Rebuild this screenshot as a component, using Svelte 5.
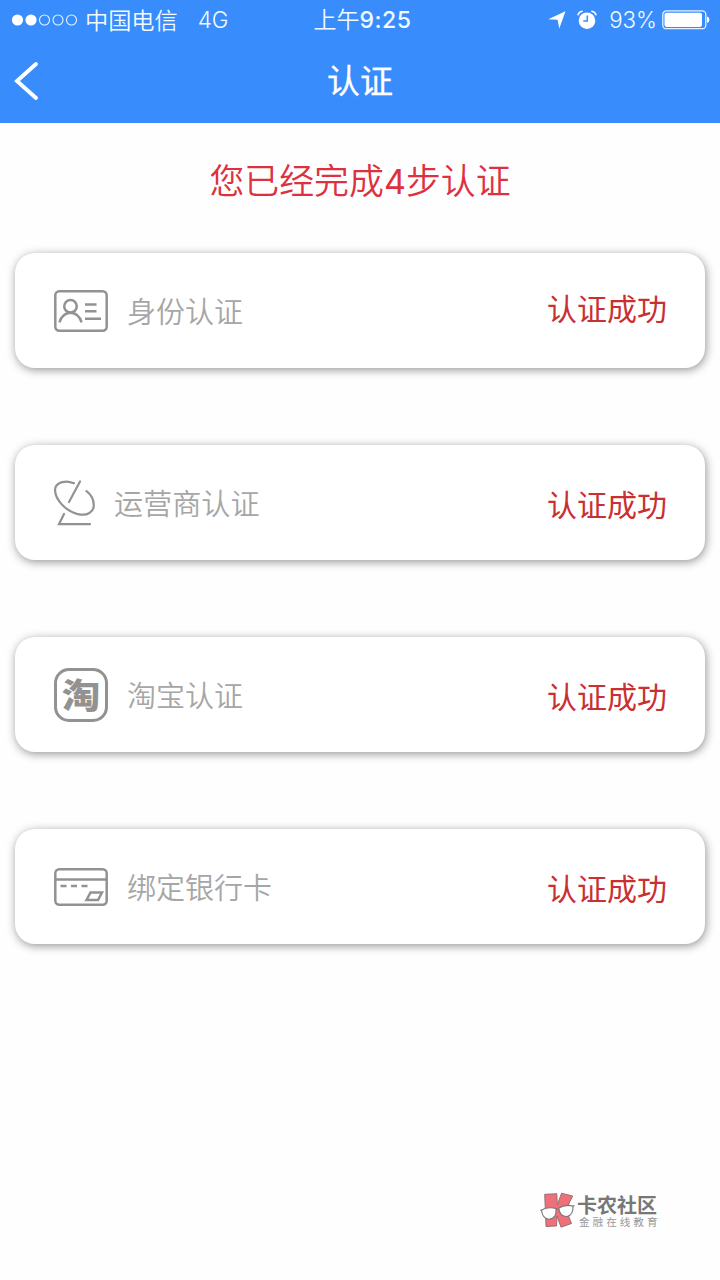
<script>
  const steps = [
    { icon: 'id', label: '身份认证', status: '认证成功' },
    { icon: 'dish', label: '运营商认证', status: '认证成功' },
    { icon: 'tao', label: '淘宝认证', status: '认证成功' },
    { icon: 'card', label: '绑定银行卡', status: '认证成功' }
  ];
</script>

<div class="screen">
  <header>
    <div class="statusbar">
      <div class="carrier">
        <svg width="66" height="14" viewBox="0 0 66 14">
          <circle cx="5.5" cy="7" r="5.6" fill="#fff" />
          <circle cx="19" cy="7" r="5.6" fill="#fff" />
          <g fill="none" stroke="#e4f3ff" stroke-width="1.1">
            <circle cx="32.5" cy="7" r="5" />
            <circle cx="46" cy="7" r="5" />
            <circle cx="59.5" cy="7" r="5" />
          </g>
        </svg>
        <span class="operator">中国电信</span>
        <span class="network">4G</span>
      </div>
      <div class="time">上午<b>9:25</b></div>
      <div class="power">
        <svg class="arrow" width="18" height="18" viewBox="0 0 18 18">
          <path d="M17.5 0.3 L11.3 17.5 L9.6 8.8 L0.3 8.2 Z" fill="#fff" />
        </svg>
        <svg class="alarm" width="20" height="20" viewBox="0 0 20 20">
          <circle cx="10" cy="10.7" r="8.3" fill="#fff" />
          <path d="M1 4.8 Q2 1.8 5.2 1.3 M19 4.8 Q18 1.8 14.8 1.3" fill="none" stroke="#fff" stroke-width="1.5" stroke-linecap="round" />
          <path d="M10.3 5.5 V11 H6.3" fill="none" stroke="#388cfc" stroke-width="1.5" />
        </svg>
        <span class="percent">93%</span>
        <svg class="battery" width="48" height="20" viewBox="0 0 48 20">
          <rect x="0.8" y="0.9" width="43" height="17.8" rx="3.5" fill="none" stroke="#e4f3ff" stroke-width="1.3" />
          <rect x="2.5" y="2.7" width="37.5" height="14.2" rx="1.8" fill="#fff" />
          <path d="M45 6.6 Q47.4 7.2 47.4 9.8 T45 13 Z" fill="#fff" />
        </svg>
      </div>
    </div>
    <nav>
      <svg class="back" width="26" height="40" viewBox="0 0 26 40">
        <path d="M22 3 L3 20 L22 37" fill="none" stroke="#fff" stroke-width="3.9" stroke-linecap="round" />
      </svg>
      <h1>认证</h1>
    </nav>
  </header>

  <p class="summary">您已经完成<span>4</span>步认证</p>

  <main>
    {#each steps as step}
      <section class="step {step.icon}">
        {#if step.icon === 'id'}
          <svg width="54" height="42" viewBox="0 0 54 42" fill="none" stroke="#929292" stroke-width="2.5">
            <rect x="1.3" y="1.3" width="51.4" height="39.4" rx="4" />
            <circle cx="16.5" cy="16.3" r="6.3" />
            <path d="M5.5 32.3 Q8 23.2 16.5 22.7 Q25 23.2 27.5 32.3 M31 14.5 H42.5 M31 21.3 H42.5 M31 28.7 H47" />
          </svg>
        {:else if step.icon === 'dish'}
          <svg width="42" height="46" viewBox="0 0 42 46" fill="none" stroke="#929292" stroke-width="2.2" stroke-linecap="round">
            <path d="M20 3.2 C12 0 3 1.8 1.3 8 C-0.5 18 11 31 24 34.2 C33.5 36.2 39.6 32 39.8 25.5 C39.8 20 37 14.5 32.5 11.2" />
            <path d="M26 1.5 L15 22 M10 34 L5 44.2 H36" />
          </svg>
        {:else if step.icon === 'tao'}
          <span class="taobao"><span>淘</span></span>
        {:else}
          <svg width="54" height="38" viewBox="0 0 54 38" fill="none" stroke="#929292" stroke-width="2.5">
            <rect x="1.3" y="1.3" width="51.4" height="35.4" rx="4" />
            <path d="M1.2 11.5 H52.8 M6.5 18 H12.5 M17 18 H23 M27.5 18 H33.5" />
            <path d="M36.5 24.5 H48 L44 32 H32.5 Z" />
          </svg>
        {/if}
        <span class="label">{step.label}</span>
        <span class="status">{step.status}</span>
      </section>
    {/each}
  </main>

  <footer>
    <svg width="36" height="38" viewBox="0 0 36 38">
      <path d="M4.7 3.3 L16.8 2.7 L17.3 14 L21.5 2.2 L32.7 5 L26 18.5 L31.5 32.5 L21 36.2 L17 25 L16.5 35 L6 35.5 Z" fill="#ef7078" stroke="#8b6b6e" stroke-width="0.9" />
      <g fill="#fff" stroke="#777" stroke-width="1.1">
        <path d="M1.5 19 Q8 15.5 16 17.5 Q17 27.5 9 28.2 Q2.5 28 1.5 19 Z" />
        <path d="M18.8 17 Q25 13 33 15 Q33.5 24 27 25.5 Q19.5 25.5 18.8 17 Z" />
        <path d="M16 18.5 L18.8 17.8 M0.3 19.2 L2 19.6 M32.7 15.6 L34.5 14.4" />
      </g>
    </svg>
    <div class="brand">
      <strong>卡农社区</strong>
      <small>金融在线教育</small>
    </div>
  </footer>
</div>

<style>
  :global(body) {
    background: #fefefe;
  }
  .screen {
    box-sizing: border-box;
    width: 720px;
    height: 1280px;
    overflow: hidden;
    display: flex;
    flex-direction: column;
    background: #fefefe;
    font-family: 'Noto Sans CJK SC', sans-serif;
  }
  header {
    height: 123px;
    flex: none;
    background: #388cfc;
    color: #fff;
  }
  .statusbar {
    height: 39px;
    display: grid;
    grid-template-columns: 1fr auto 1fr;
    align-items: center;
    padding: 0 10px 0 12px;
    font-size: 23px;
    line-height: 36px;
    font-weight: 350;
    color: #f2faff;
  }
  .carrier,
  .power {
    display: flex;
    align-items: center;
  }
  .power {
    justify-content: flex-end;
  }
  .operator {
    margin-left: 7px;
    font-size: 23.2px;
    padding-bottom: 2px;
  }
  .network {
    margin-left: 20px;
    font-family: Inter, sans-serif;
    font-size: 22.4px;
  }
  .time {
    white-space: nowrap;
    padding: 0 0 2px 3px;
  }
  .time b {
    font-family: Inter, sans-serif;
    font-weight: 550;
    font-size: 23px;
    letter-spacing: 0.5px;
  }
  .alarm {
    margin: 0 12px 0 11px;
  }
  .percent {
    font-family: Inter, sans-serif;
    font-size: 22.3px;
  }
  .battery {
    margin-left: 5px;
  }
  nav {
    height: 83px;
    display: grid;
    grid-template-columns: 1fr auto 1fr;
    align-items: center;
    padding: 0 14px;
  }
  h1 {
    margin: 0;
    padding-bottom: 4px;
    font-size: 33px;
    line-height: 40px;
    font-weight: 400;
    -webkit-text-stroke: 0.3px #fff;
  }
  .summary {
    margin: 30px 0 48px;
    height: 52px;
    line-height: 52px;
    font-size: 34.9px;
    text-align: center;
    font-weight: 350;
    color: #dd3140;
  }
  .summary span {
    font-family: Inter, sans-serif;
    font-size: 34px;
    font-weight: 400;
  }
  main {
    display: flex;
    flex-direction: column;
    gap: 77px;
    padding: 0 15px;
  }
  .step {
    box-sizing: border-box;
    height: 115px;
    display: flex;
    align-items: center;
    padding: 0 38px 0 39px;
    border-radius: 20px;
    background: #fff;
    box-shadow: 1px 2px 10px rgba(0, 0, 0, 0.42);
  }
  .label {
    margin-left: 19px;
    padding-bottom: 2px;
    font-size: 29px;
    line-height: 44px;
    font-weight: 350;
    color: #a6a6a6;
  }
  .dish .label {
    margin-left: 18px;
    font-size: 29.1px;
  }
  .status {
    margin-left: auto;
    font-size: 30px;
    line-height: 44px;
    color: #c9302f;
  }
  .id .status {
    padding-bottom: 7px;
  }
  .taobao {
    box-sizing: border-box;
    width: 54px;
    height: 54px;
    border: 3px solid #929292;
    border-radius: 15px;
    display: flex;
    align-items: center;
    justify-content: center;
    font-size: 34px;
    line-height: 48px;
    font-weight: 900;
    color: #929292;
  }
  .taobao span {
    padding-bottom: 1px;
    transform: scaleX(1.13);
  }
  footer {
    margin-top: auto;
    margin-bottom: 51px;
    padding-left: 540px;
    display: flex;
    align-items: center;
  }
  .brand {
    margin-left: 1px;
    display: flex;
    flex-direction: column;
    white-space: nowrap;
  }
  strong {
    font-size: 20px;
    line-height: 22px;
    font-weight: 700;
    color: #777;
  }
  small {
    margin-left: 2px;
    font-size: 10.6px;
    line-height: 11px;
    letter-spacing: 3px;
    color: #999;
  }
</style>
